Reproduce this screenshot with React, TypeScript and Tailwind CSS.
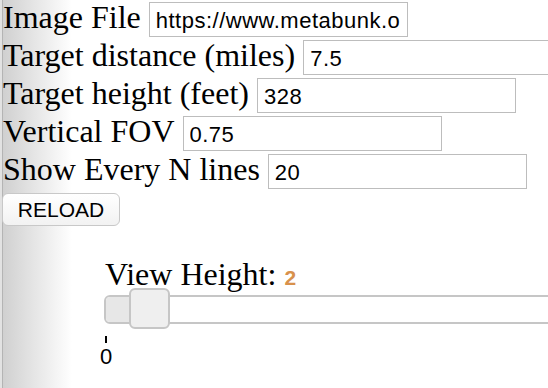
import React from 'react';

const fields = [
  { label: 'Image File', value: 'https://www.metabunk.org/sk/curve.jpg' },
  { label: 'Target distance (miles)', value: '7.5' },
  { label: 'Target height (feet)', value: '328' },
  { label: 'Vertical FOV', value: '0.75' },
  { label: 'Show Every N lines', value: '20' },
];

const serif = "font-['Liberation_Serif','Times_New_Roman',serif]";
const sans = "font-['Liberation_Sans',Arial,sans-serif]";

export default function App() {
  return (
    <div className="relative w-[548px] h-[388px] overflow-hidden text-black bg-[linear-gradient(to_right,#e2e2e2_0px,#e2e2e2_2px,#b4b4b4_2px,#b4b4b4_3px,#d0d0d0_3px,#ffffff_72px)]">
      {/* form rows */}
      <div className="flex flex-col pt-[2px] pl-[3px]">
        {fields.map((f) => (
          <div key={f.label} className="flex items-start gap-2 h-[35px] mb-[3px] whitespace-nowrap">
            <span className={`${serif} text-[32px] leading-[31px]`}>{f.label}</span>
            <input
              defaultValue={f.value}
              className={`${sans} shrink-0 w-[259px] h-[35px] px-[6px] pt-[3px] text-[22px] tracking-[0.5px] bg-white border border-[#bdbdbd] outline-none`}
            />
          </div>
        ))}
        <button
          className={`${sans} w-[118px] h-[33px] -ml-[1px] mt-[1px] text-[21px] leading-none rounded-[6px] border border-[#c8c8c8] bg-[linear-gradient(#ffffff,#f2f2f2)]`}
        >
          RELOAD
        </button>
      </div>

      {/* view height slider */}
      <div className="ml-[105px] mt-[30px] flex items-baseline gap-2 whitespace-nowrap">
        <span className={`${serif} text-[32px] leading-[37px]`}>View Height:</span>
        <span className={`${sans} text-[21px] font-bold text-[#d8914c]`}>2</span>
      </div>
      <div className="relative ml-[104px] mt-[1px] w-[460px] h-[29px] rounded-l-[6px] border-2 border-[#c6c6c6] bg-white">
        <div className="w-[26px] h-full rounded-l-[4px] bg-[#e7e7e7]" />
        <div className="absolute left-[23px] -top-[9px] w-[41px] h-[41px] rounded-[6px] border-2 border-[#c6c6c6] bg-[#efefef]" />
      </div>
      <div className="ml-[100px] mt-[12px] w-[12px] flex flex-col items-center">
        <div className="w-[2px] h-[7px] bg-black" />
        <span className={`${sans} mt-[2px] text-[22px] leading-[24px]`}>0</span>
      </div>
    </div>
  );
}
